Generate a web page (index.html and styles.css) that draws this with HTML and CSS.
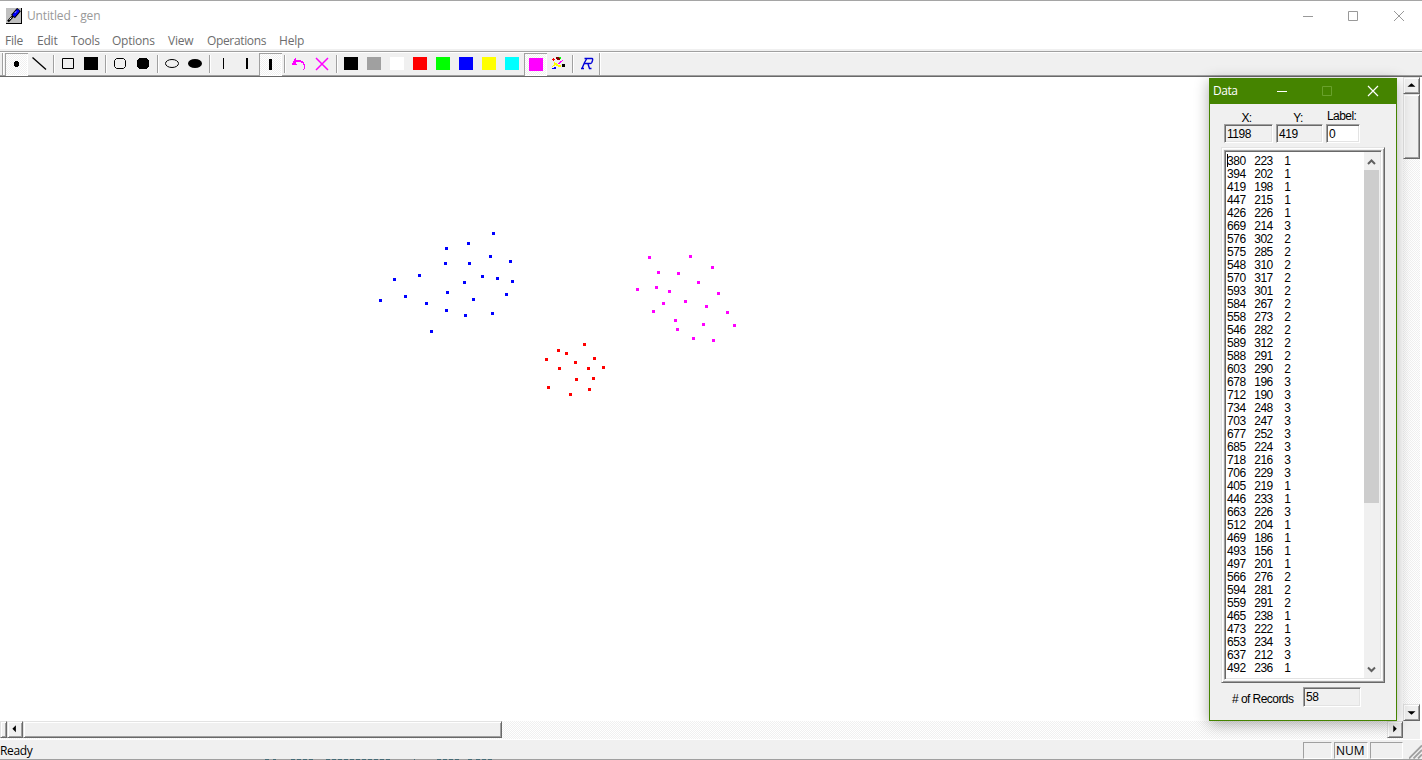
FILE: index.html
```
<!DOCTYPE html>
<html lang="en">
<head>
<meta charset="utf-8">
<title>Untitled - gen</title>
<link rel="stylesheet" href="styles.css">
</head>
<body>
<div class="app">
  <header class="titlebar">
    <svg class="app-icon" width="17" height="17" viewBox="0 0 17 17"><path fill="#c0c0c0" d="M0 0h16v16H0z"/><path d="M15 0h1v16H0v-1h15z"/><path d="M13 1.500L7 8.500" stroke="#000" stroke-width="5"/><path d="M12.500 2L7.500 8" stroke="#00f" stroke-width="3.200"/><path d="M7 8L2 13.500" stroke="#000" stroke-width="2.400"/><path d="M5.500 9.500l-2 2M10 3.500l-1 1.200" stroke="#fff"/></svg>
    <span class="app-title">Untitled - gen</span>
    <svg class="caption" width="106" height="12" viewBox="0 0 106 12" fill="none" stroke="#999"><path d="M0 6.500h10M45.500 1.500h9v9h-9zM91 1l10 10M101 1L91 11"/></svg>
  </header>
  <nav class="menu"><span class="m1">File</span><span class="m2">Edit</span><span class="m3">Tools</span><span class="m4">Options</span><span class="m5">View</span><span class="m6">Operations</span><span class="m7">Help</span></nav>
  <div class="toolbar">
    <i class="grip"></i>
    <svg class="tool pressed" viewBox="0 0 23 23" shape-rendering="crispEdges"><path d="M10 8h3v1h1v4h-1v1h-3v-1H9V9h1z"/></svg>
    <svg class="tool" viewBox="0 0 23 23"><path d="M4.500 4.500L18 16.500" stroke="#000" stroke-width="1.300"/></svg>
    <i class="sep"></i>
    <svg class="tool" viewBox="0 0 23 23"><path d="M5.500 5.500h11v10h-11z" fill="none" stroke="#000"/></svg>
    <svg class="tool" viewBox="0 0 23 23"><path d="M4 4h14v13H4z"/></svg>
    <i class="sep"></i>
    <svg class="tool" viewBox="0 0 23 23"><path d="M7.500 5.500h7l2 2v6l-2 2h-7l-2-2v-6z" fill="none" stroke="#000"/></svg>
    <svg class="tool" viewBox="0 0 23 23" shape-rendering="crispEdges"><path d="M7 5h8v1h1v1h1v7h-1v1h-1v1H7v-1H6v-1H5V7h1V6h1z"/></svg>
    <i class="sep"></i>
    <svg class="tool" viewBox="0 0 23 23"><ellipse cx="11" cy="10.500" rx="6.500" ry="4" fill="none" stroke="#000"/></svg>
    <svg class="tool" viewBox="0 0 23 23"><ellipse cx="11" cy="10.500" rx="7" ry="4.500"/></svg>
    <i class="sep"></i>
    <svg class="tool" viewBox="0 0 23 23"><path d="M10 5h1v11h-1z"/></svg>
    <svg class="tool" viewBox="0 0 23 23"><path d="M10 5h2v11h-2z"/></svg>
    <svg class="tool pressed" viewBox="0 0 23 23"><path d="M10 6h3v11h-3z"/></svg>
    <i class="sep"></i>
    <svg class="tool" viewBox="0 0 23 23" shape-rendering="crispEdges"><path fill="#f0f" d="M7 5h1v2h5v1h2v1h1v2h1v5h-1v1h-1v-1h1v-4h-1v-2h-2V9H8v2h1v1H4v-2h1V8h1V6h1z"/></svg>
    <svg class="tool" viewBox="0 0 23 23" fill="none" stroke="#f0f" stroke-width="1.500"><path d="M5 5l12 12M17 5L5 17"/></svg>
    <i class="sep"></i>
    <svg class="tool" viewBox="0 0 23 23"><path d="M4 4h14v13H4z"/></svg>
    <svg class="tool" viewBox="0 0 23 23"><path fill="#a0a0a0" d="M4 4h14v13H4z"/></svg>
    <svg class="tool" viewBox="0 0 23 23"><path fill="#fff" d="M4 4h14v13H4z"/></svg>
    <svg class="tool" viewBox="0 0 23 23"><path fill="red" d="M4 4h14v13H4z"/></svg>
    <svg class="tool" viewBox="0 0 23 23"><path fill="#0f0" d="M4 4h14v13H4z"/></svg>
    <svg class="tool" viewBox="0 0 23 23"><path fill="#00f" d="M4 4h14v13H4z"/></svg>
    <svg class="tool" viewBox="0 0 23 23"><path fill="#ff0" d="M4 4h14v13H4z"/></svg>
    <svg class="tool" viewBox="0 0 23 23"><path fill="#0ff" d="M4 4h14v13H4z"/></svg>
    <svg class="tool pressed" viewBox="0 0 23 23"><path fill="#f0f" d="M5 5h14v13H5z"/></svg>
    <svg class="tool palette" viewBox="0 0 23 23" shape-rendering="crispEdges"><path fill="red" d="M5 5h1v1h1v1H6v1H5V7H4V6h1z"/><path fill="#800000" d="M8 4h3v1h1v2h-3V6H8z"/><path fill="#0f0" d="M11 4h2v2h-1V5h-1z"/><path fill="#ff0" d="M6 9h1v1h2v1h1v1h3v2h-3v-1H8v-1H6zM6 12h1v1H5v1H4v-1h1v-1z"/><path fill="#f0f" d="M14 7h1v1h-1v1h-1v1h-1v1h-2v-1h1V9h1V8h2z"/><path fill="#00f" d="M6 14h2v2H4v-1h2z"/><path d="M14 11h3v3h-3z"/></svg>
    <i class="sep"></i>
    <svg class="tool" viewBox="0 0 23 23" fill="none" stroke="#0000d8"><path d="M8.500 5.500H16q1 0 .5 2l-.7 2q-.5 1-1.500 1H8" stroke-width="1.400"/><path d="M10.500 6L8.300 10 6 15.500M5 15.500h3M12 11l1.500 4.500h2" stroke-width="1.400"/></svg>
    <i class="bar-end"></i>
  </div>
  <main class="workspace">
    <div class="center">
      <svg class="plot" width="1403" height="644" viewBox="0 77 1403 644">
        <g fill="none" stroke-width="3" shape-rendering="crispEdges">
          <path stroke="#00f" d="M379 300.500h3M393 279.500h3M418 275.500h3M404 296.500h3M425 303.500h3M430 331.500h3M445 310.500h3M446 292.500h3M444 263.500h3M445 248.500h3M467 243.500h3M468 263.500h3M463 282.500h3M472 299.500h3M464 315.500h3M481 276.500h3M489 256.500h3M492 233.500h3M496 278.500h3M509 261.500h3M511 281.500h3M505 294.500h3M491 313.500h3"/>
          <path stroke="red" d="M545 359.500h3M557 350.500h3M565 353.500h3M583 344.500h3M558 368.500h3M574 362.500h3M593 358.500h3M587 368.500h3M602 367.500h3M575 379.500h3M592 378.500h3M588 389.500h3M547 387.500h3M569 394.500h3"/>
          <path stroke="#f0f" d="M648 257.500h3M689 256.500h3M711 267.500h3M657 272.500h3M677 273.500h3M697 282.500h3M636 289.500h3M655 287.500h3M668 291.500h3M662 303.500h3M652 311.500h3M684 301.500h3M717 293.500h3M705 306.500h3M726 312.500h3M733 325.500h3M702 324.500h3M674 320.500h3M676 329.500h3M692 338.500h3M712 340.500h3"/>
        </g>
      </svg>
      <div class="hscroll">
        <i class="raised split"></i>
        <svg class="raised arrow" viewBox="0 0 16 17"><path d="M5 7.500l4-4v8z"/></svg>
        <i class="raised hthumb"></i>
        <svg class="raised arrow right" viewBox="0 0 16 17"><path d="M10 7.500l-4-4v8z"/></svg>
      </div>
    </div>
    <div class="vscroll">
      <svg class="raised varrow" viewBox="0 0 17 17"><path d="M4 10l4.500-4 4.500 4z"/></svg>
      <i class="raised vthumb"></i>
      <svg class="raised varrow down" viewBox="0 0 17 17"><path d="M4 7l4.500 4L13 7z"/></svg>
      <i class="corner"></i>
    </div>
  </main>
  <footer class="status">
    <span class="ready">Ready</span>
    <span class="pane p1"></span><span class="pane num">NUM</span><span class="pane p3"></span>
    <svg width="13" height="16" viewBox="0 0 13 16"><path d="M0 15.500L13 2.500M4.500 15.500L13 7M9 15.500l4-4" stroke="#a0a0a0" stroke-width="1.800"/></svg>
  </footer>
  <div class="bottom-line"><svg width="600" height="1" viewBox="0 0 600 1"><path d="M265 .5h4M273 .5h3M291 .5h24M326 .5h64M414 .5h1M437 .5h24M468 .5h4M476 .5h18" stroke="#456b77" stroke-dasharray="4 2"/></svg></div>

  <section class="data-window">
    <div class="data-title"><span>Data</span><svg width="103" height="12" viewBox="0 0 103 12" fill="none" stroke="#fff"><path d="M0 6.500h10"/><path d="M45.500 1.500h9v9h-9z" stroke="#69a12c"/><path d="M91 1l10 10M101 1L91 11" stroke-width="1.200"/></svg></div>
    <div class="data-body">
      <div class="fields">
        <div class="field fx"><label>X:</label><div class="box">1198</div></div>
        <div class="field fy"><label>Y:</label><div class="box">419</div></div>
        <div class="field fl"><label>Label:</label><div class="box white">0</div></div>
      </div>
      <div class="list-frame"><div class="list">
<pre class="rows">380   223    1
394   202    1
419   198    1
447   215    1
426   226    1
669   214    3
576   302    2
575   285    2
548   310    2
570   317    2
593   301    2
584   267    2
558   273    2
546   282    2
589   312    2
588   291    2
603   290    2
678   196    3
712   190    3
734   248    3
703   247    3
677   252    3
685   224    3
718   216    3
706   229    3
405   219    1
446   233    1
663   226    3
512   204    1
469   186    1
493   156    1
497   201    1
566   276    2
594   281    2
559   291    2
465   238    1
473   222    1
653   234    3
637   212    3
492   236    1</pre>
        <div class="list-scroll">
          <svg width="15" height="17" viewBox="0 0 15 17"><path d="M4 11l3.500-3.500L11 11" fill="none" stroke="#606060" stroke-width="2"/></svg>
          <i></i>
          <svg class="last" width="15" height="17" viewBox="0 0 15 17"><path d="M4 6.500L7.500 10 11 6.500" fill="none" stroke="#606060" stroke-width="2"/></svg>
        </div>
      </div></div>
      <div class="records"><span># of Records</span><div class="box">58</div></div>
    </div>
  </section>
</div>
</body>
</html>
```
FILE: styles.css
```
* { box-sizing: border-box; }
body { margin: 0; background: #fff; overflow: hidden; font: 12px/16px "Open Sans", "Noto Sans", sans-serif; }
svg { display: block; flex: none; }
i { display: block; flex: none; }
.app { position: relative; width: 1422px; height: 760px; display: flex; flex-direction: column; border-top: 1px solid #a5a5a5; }
.titlebar, .menu, .toolbar, .workspace, .status, .bottom-line { flex: none; }
.titlebar { height: 29px; padding: 1px 12px 0 6px; display: flex; align-items: center; color: #999; }
.app-title { margin-left: 4px; letter-spacing: -.15px; }
.caption { margin-left: auto; margin-right: 1px; }
.menu { height: 21px; padding: 3px 0 0 5px; display: flex; align-items: center; color: #6d6d6d; letter-spacing: -.22px; border-bottom: 2px solid #f0f0f0; }
.menu span { white-space: nowrap; }
.m1 { width: 32px; } .m2 { width: 34px; } .m3 { width: 41px; } .m4 { width: 56px; }
.m5 { width: 39px; } .m6 { width: 72px; letter-spacing: -.35px; } .m7 { width: 30px; }
.toolbar { height: 26px; padding-top: 1px; display: flex; background: #f0f0f0; border-top: 1px solid #a0a0a0; border-bottom: 1px solid #696969; box-shadow: inset 0 1px #fff, inset 0 -1px #a0a0a0; }
.grip { width: 5px; height: 22px; border-left: 2px solid #f0f0f0; background: linear-gradient(90deg, #a0a0a0 1px, #fff 1px 2px, #f0f0f0 2px); }
.tool { width: 23px; height: 23px; }
.palette { padding-left: 1px; width: 24px; margin-right: -1px; }
.pressed { background: repeating-conic-gradient(#fff 0 25%, #f0f0f0 0 50%) 0 0 / 2px 2px; box-shadow: inset 1px 1px #a0a0a0, inset -1px -1px #fff; }
.sep { width: 6px; height: 18px; margin-top: 2px; background: linear-gradient(90deg, transparent 2px, #a0a0a0 2px 3px, #fff 3px 4px, transparent 4px); }
.bar-end { width: 2px; height: 22px; border-left: 1px solid #a0a0a0; border-right: 1px solid #fff; }
.workspace { height: 662px; display: flex; }
.center { width: 1403px; display: flex; flex-direction: column; }
.hscroll { height: 18px; display: flex; }
.hscroll, .vscroll { background: repeating-conic-gradient(#fff 0 25%, #f0f0f0 0 50%) 0 0 / 2px 2px; }
.raised { background: #f0f0f0; border: 1px solid; border-color: #e3e3e3 #696969 #696969 #e3e3e3; box-shadow: inset 1px 1px #fff, inset -1px -1px #a0a0a0; }
.split { width: 7px; height: 17px; }
.arrow { width: 16px; height: 17px; }
.hthumb { width: 479px; height: 17px; }
.right { margin-left: auto; }
.vscroll { width: 17px; display: flex; flex-direction: column; }
.varrow { width: 17px; height: 17px; }
.vthumb { width: 17px; height: 65px; }
.down { margin-top: auto; }
.corner { width: 17px; height: 18px; background: #f0f0f0; }
.status { height: 20px; border-top: 1px solid #fff; background: #f0f0f0; display: flex; align-items: flex-end; color: #000; }
.ready { align-self: center; margin-right: auto; letter-spacing: -.35px; padding-top: 3px; }
.pane { height: 17px; margin-right: 2px; border: 1px solid; border-color: #a0a0a0 #fff #fff #a0a0a0; }
.p1 { width: 29px; } .p3 { width: 33px; margin-right: 6px; }
.num { width: 34px; padding-left: 1px; line-height: 16px; }
.bottom-line { height: 1px; background: #a0a0a0; }

.data-window { position: absolute; left: 1209px; top: 77px; width: 188px; height: 643px; border: 1px solid #458400; background: #f0f0f0; box-shadow: 0 3px 14px rgba(0, 0, 0, .32); font: 12px/13px "Liberation Sans", sans-serif; color: #000; }
.data-title { height: 25px; padding: 0 0 2px 3px; display: flex; align-items: center; background: #458400; color: #fff; font: 12px/16px "Open Sans", "Noto Sans", sans-serif; letter-spacing: -.45px; }
.data-title svg { margin-left: auto; margin-right: 16px; }
.data-body { padding: 6px 10px 0 11px; }
.fields { display: flex; gap: 3px; padding-left: 3px; }
.field label { display: block; height: 14px; padding-top: 2px; letter-spacing: -.6px; text-align: center; }
.fx { width: 49px; } .fx label { padding-right: 4px; }
.fy { width: 47px; } .fy label { padding-right: 3px; }
.fl { width: 34px; } .fl label { padding: 0 0 0 1px; text-align: left; letter-spacing: -.55px; }
.box { height: 19px; padding: 3px 0 0 2px; border: 1px solid; border-color: #a0a0a0 #fff #fff #a0a0a0; box-shadow: inset 1px 1px #696969, inset -1px -1px #e3e3e3; letter-spacing: -.45px; }
.white { background: #fff; }
.list-frame { width: 164px; height: 536px; margin-top: 4px; padding: 2px; border: 1px solid; border-color: #e3e3e3 #696969 #696969 #e3e3e3; box-shadow: inset 1px 1px #fff, inset -1px -1px #a0a0a0; }
.list { height: 530px; padding: 1px 1px 1px 2px; display: flex; justify-content: space-between; background: #fff; border: 1px solid; border-color: #a0a0a0 #fff #fff #a0a0a0; box-shadow: inset 1px 1px #696969, inset -1px -1px #e3e3e3; }
.rows { margin: 0; height: 526px; padding-top: 3px; font: 12px/13px "Liberation Sans", sans-serif; letter-spacing: -.45px; word-spacing: -.05px; background: linear-gradient(#000, #000) 0 2px / 1px 13px no-repeat; }
.list-scroll { width: 16px; height: 526px; padding-top: 1px; display: flex; flex-direction: column; background: #f0f0f0; }
.list-scroll i { width: 15px; height: 333px; background: #cdcdcd; }
.last { margin-top: auto; }
.records { display: flex; padding-left: 11px; margin-top: 4px; }
.records span { width: 71px; padding-top: 6px; letter-spacing: -.55px; white-space: nowrap; }
.records .box { width: 58px; height: 20px; }
```
